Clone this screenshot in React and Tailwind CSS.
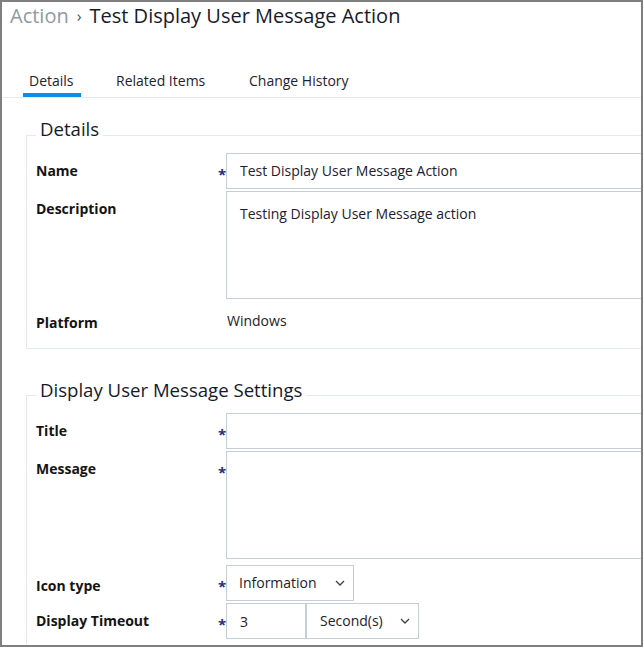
import React from "react";

const font = { fontFamily: '"Open Sans", "Noto Sans", sans-serif' };

function Chevron() {
  return (
    <svg width="10" height="6" viewBox="0 0 10 6" className="shrink-0">
      <polyline points="1,1 5,5 9,1" fill="none" stroke="#3a3f4b" strokeWidth="1.3" />
    </svg>
  );
}

function Star() {
  return (
    <span className="text-[15px] font-bold leading-none text-[#1f2c8a] translate-y-[3px]">*</span>
  );
}

function Row({ label, required, children, tall, labelClass = "" }) {
  return (
    <div className="flex items-start">
      <div
        className={
          "flex h-[36px] w-[182px] items-center text-[14px] font-bold leading-[20px] text-[#141414] " +
          labelClass
        }
      >
        {label}
      </div>
      <div className="flex h-[36px] w-[8px] items-center justify-start">
        {required ? <Star /> : null}
      </div>
      <div className={"flex-1 " + (tall ? "mb-[4px]" : "")}>{children}</div>
    </div>
  );
}

function TextInput({ value }) {
  return (
    <input
      readOnly
      value={value}
      className="block h-[36px] w-full border border-[#c4ceda] bg-white px-[13px] pb-[1px] text-[14px] leading-[20px] text-[#1b2032] outline-none"
    />
  );
}

function TextArea({ value }) {
  return (
    <textarea
      readOnly
      value={value}
      className="block h-[108px] w-full resize-none border border-[#c4ceda] bg-white px-[13px] pt-[12px] text-[14px] leading-[20px] text-[#1b2032] outline-none"
    />
  );
}

function Select({ value, w }) {
  return (
    <div
      className={
        "flex h-[36px] items-center justify-between border border-[#c4ceda] bg-white pl-[12px] pr-[8px] text-[14px] leading-[20px] text-[#1b2032] " +
        w
      }
    >
      <span>{value}</span>
      <Chevron />
    </div>
  );
}

function Fieldset({ title, children, className, legendClass, bodyClass }) {
  return (
    <div className={"ml-[24px] w-[820px] border border-[#e4e9ee] pl-[9px] " + className}>
      <div
        className={
          "w-fit bg-white px-[4px] text-[18.6px] leading-[24px] text-[#16192b] " + legendClass
        }
      >
        {title}
      </div>
      <div className={"flex flex-col gap-[2px] " + bodyClass}>{children}</div>
    </div>
  );
}

export default function App() {
  return (
    <div
      style={font}
      className="h-[647px] w-[643px] overflow-hidden border-2 border-[#7f7f7f] bg-white"
    >
      <div className="w-[900px]">
        {/* Breadcrumb */}
        <div className="flex items-center pl-[8px] pt-[1px] text-[20px] leading-[26px]">
          <span className="text-[#8d9aa7]">Action</span>
          <span className="mx-[8px] text-[16px] text-[#4a4f5c]">›</span>
          <span className="text-[#161a2c]">Test Display User Message Action</span>
        </div>

        {/* Tabs */}
        <div className="mt-[42px] flex border-b border-[#e6e9ed] pl-[21px] text-[14px] leading-[20px] text-[#1d2233]">
          <div className="w-[58px]">
            <div className="pl-[6px]">Details</div>
            <div className="mt-[2px] h-[4px] bg-[#0f8fe3]" />
          </div>
          <div className="ml-[29px] w-[133px] pl-[6px]">Related Items</div>
          <div className="pl-[6px]">Change History</div>
        </div>

        {/* Details fieldset */}
        <Fieldset
          title="Details"
          className="mt-[37px] pb-[9px]"
          legendClass="-mt-[19px]"
          bodyClass="mt-[12px]"
        >
          <Row label="Name" required>
            <TextInput value="Test Display User Message Action" />
          </Row>
          <Row label="Description" tall>
            <TextArea value="Testing Display User Message action" />
          </Row>
          <div className="flex h-[34px] items-center text-[14px] leading-[20px]">
            <div className="mt-[2px] w-[190px] font-bold text-[#141414]">Platform</div>
            <div className="-mt-[2px] pl-[1px] text-[#1b2032]">Windows</div>
          </div>
        </Fieldset>

        {/* Display User Message Settings */}
        <Fieldset
          title="Display User Message Settings"
          className="mt-[46px] pb-[20px]"
          legendClass="-mt-[18px]"
          bodyClass="mt-[11px]"
        >
          <Row label="Title" required>
            <TextInput value="" />
          </Row>
          <Row label="Message" required tall>
            <TextArea value="" />
          </Row>
          <Row label="Icon type" required labelClass="pt-[6px]">
            <Select value="Information" w="w-[128px]" />
          </Row>
          <Row label="Display Timeout" required>
            <div className="flex">
              <input
                readOnly
                value="3"
                className="block h-[36px] w-[80px] border border-[#c4ceda] bg-white px-[13px] text-[14px] leading-[20px] text-[#1b2032] outline-none"
              />
              <Select value="Second(s)" w="w-[113px] pl-[13px]" />
            </div>
          </Row>
        </Fieldset>
      </div>
    </div>
  );
}
